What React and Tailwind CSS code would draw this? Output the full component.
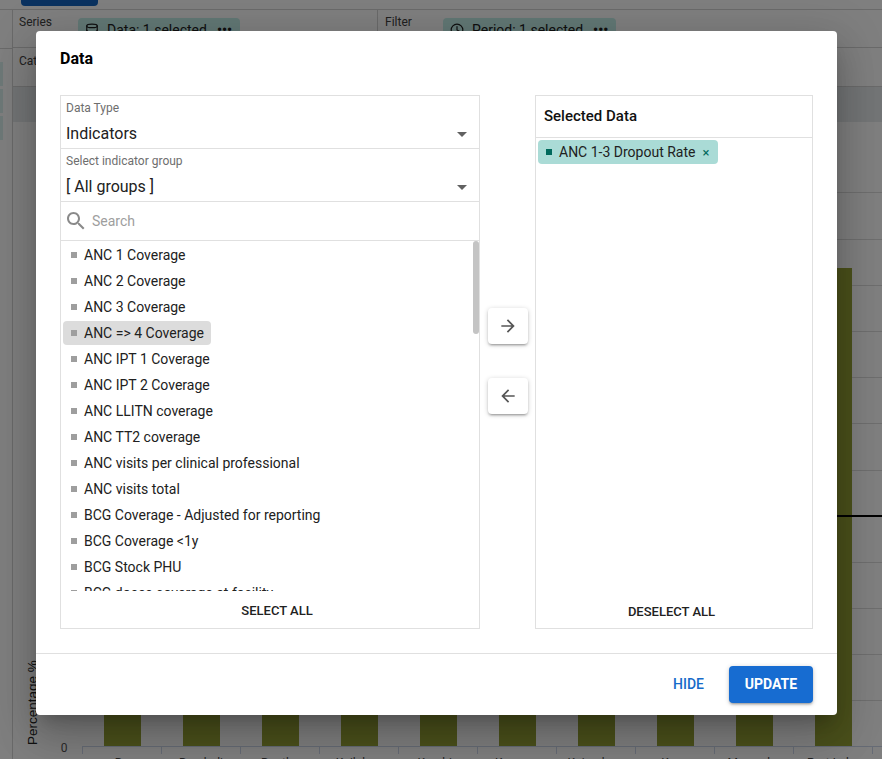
import React from 'react';
import { Database, Clock } from 'lucide-react';

const indicators = [
  'ANC 1 Coverage',
  'ANC 2 Coverage',
  'ANC 3 Coverage',
  'ANC => 4 Coverage',
  'ANC IPT 1 Coverage',
  'ANC IPT 2 Coverage',
  'ANC LLITN coverage',
  'ANC TT2 coverage',
  'ANC visits per clinical professional',
  'ANC visits total',
  'BCG Coverage - Adjusted for reporting',
  'BCG Coverage <1y',
  'BCG Stock PHU',
  'BCG doses coverage at facility',
  'BCG doses given',
];

const districts = ['Bo', 'Bombali', 'Bonthe', 'Kailahun', 'Kambia', 'Kenema', 'Koinadugu', 'Kono', 'Moyamba', 'Port Loko'];

const CaretDown = () => (
  <svg width="24" height="24" viewBox="0 0 24 24" fill="#616161" className="shrink-0">
    <path d="M7 10l5 5 5-5z" />
  </svg>
);

const SelectRow = ({ label, value }) => (
  <div className="h-[53px] border-b border-[#e0e0e0] pl-[5px] pr-[5px]">
    <div className="text-[12px] leading-[14px] pt-[5px] h-[23px] text-[#6e6e6e]">{label}</div>
    <div className="flex items-center justify-between h-[29px]">
      <span className="text-[16px] text-[#212121]">{value}</span>
      <CaretDown />
    </div>
  </div>
);

const ArrowButton = ({ d }) => (
  <button className="w-10 h-9 rounded bg-white flex items-center justify-center shadow-[0_1px_5px_rgba(0,0,0,0.2),0_2px_2px_rgba(0,0,0,0.14),0_3px_1px_-2px_rgba(0,0,0,0.12)]">
    <svg width="20" height="20" viewBox="0 0 24 24" fill="#555555">
      <path d={d} />
    </svg>
  </button>
);

const Chart = () => (
  <svg width="869" height="637" viewBox="13 122 869 637" className="block">
    {[192, 239, 285, 331, 377, 423, 470, 516, 562, 608, 654, 700].map((y) => (
      <line key={y} x1="82" x2="882" y1={y + 0.5} y2={y + 0.5} stroke="#dcdcdc" />
    ))}
    {districts.map((name, i) => (
      <g key={name}>
        <rect x={104 + i * 79} y="268" width="37" height="478" fill="#96a336" />
        <line x1={82.5 + i * 79} x2={82.5 + i * 79} y1="746" y2="754" stroke="#ccd6eb" />
        <text x={122 + i * 79} y="767" textAnchor="middle" fontSize="12" fill="#444">{name}</text>
      </g>
    ))}
    <line x1="872.5" x2="872.5" y1="746" y2="754" stroke="#ccd6eb" />
    <line x1="82" x2="882" y1="746.5" y2="746.5" stroke="#ccd6eb" />
    <line x1="82" x2="882" y1="516" y2="516" stroke="#000" strokeWidth="2" />
    <text x="64" y="752" textAnchor="middle" fontSize="12" fill="#555">0</text>
    <text transform="translate(37 745) rotate(-90)" fontSize="13.5" fill="#222" style={{ fontFamily: '"Liberation Sans", sans-serif' }}>Percentage %</text>
  </svg>
);

const App = () => {
  return (
    <div className="relative w-[882px] h-[759px] overflow-hidden bg-white font-['Roboto',sans-serif] text-[#212121]">
      {/* page behind the dialog */}
      <div className="h-[10px] border-b border-[#d4d4d4] pl-[21px]">
        <div className="w-[77px] h-[6px] bg-[#1565c0] rounded-b" />
      </div>
      <div className="flex h-[749px]">
        <div className="w-[13px] shrink-0 border-r border-[#d4d4d4]">
          <div className="h-[39px] border-b border-[#d4d4d4]" />
          <div className="mt-[13px] flex flex-col gap-[3px]">
            <div className="w-[3px] h-[24px] bg-[#dcf3f0]" />
            <div className="w-[3px] h-[24px] bg-[#dcf3f0]" />
            <div className="w-[3px] h-[24px] bg-[#dcf3f0]" />
          </div>
        </div>
        <div className="flex-1 min-w-0">
          <div className="flex h-[38px] border-b border-[#d4d4d4]">
            <div className="w-[365px] border-r border-[#d4d4d4] flex pl-[6px] pt-[3px]">
              <span className="text-[12px] w-[59px] text-[#424242]">Series</span>
              <div className="w-[162px] h-[24px] mt-[5px] rounded bg-[#c4f0eb] flex items-center gap-[8px] pl-[7px] text-[14px]">
                <Database size={14} />
                <span>Data: 1 selected</span>
                <span className="font-bold ml-[2px]">•••</span>
              </div>
            </div>
            <div className="flex pl-[7px] pt-[3px]">
              <span className="text-[12px] w-[58px] text-[#424242]">Filter</span>
              <div className="w-[173px] h-[24px] mt-[5px] rounded bg-[#c4f0eb] flex items-center gap-[8px] pl-[7px] text-[14px]">
                <Clock size={14} />
                <span>Period: 1 selected</span>
                <span className="font-bold ml-[2px]">•••</span>
              </div>
            </div>
          </div>
          <div className="h-[39px] border-b border-[#d4d4d4] pl-[6px] pt-[4px] text-[12px] text-[#424242]">Category</div>
          <div className="h-[35px] bg-[#e6eaec]" />
          <Chart />
        </div>
      </div>

      {/* dialog */}
      <div className="absolute inset-0 bg-black/50 pl-[36px] pt-[31px]">
        <div className="w-[801px] h-[684px] rounded bg-white flex flex-col shadow-[0_11px_15px_-7px_rgba(0,0,0,0.2),0_24px_38px_3px_rgba(0,0,0,0.14),0_9px_46px_8px_rgba(0,0,0,0.12)]">
          <div className="h-[64px] shrink-0 pl-[24px] pt-[18px] text-[16px] leading-[20px] font-bold text-black">Data</div>

          <div className="flex h-[534px] shrink-0 pl-[24px]">
            <div className="w-[420px] border border-[#e0e0e0] flex flex-col">
              <SelectRow label="Data Type" value="Indicators" />
              <SelectRow label="Select indicator group" value="[ All groups ]" />
              <div className="h-[39px] shrink-0 border-b border-[#e0e0e0] flex items-center pl-[3px]">
                <svg width="24" height="24" viewBox="0 0 24 24" fill="#8a8a8a" className="shrink-0">
                  <path d="M15.5 14h-.79l-.28-.27C15.41 12.59 16 11.11 16 9.5 16 5.91 13.09 3 9.5 3S3 5.91 3 9.5 5.91 16 9.5 16c1.61 0 3.09-.59 4.23-1.57l.27.28v.79l5 4.99L20.49 19l-4.99-5zm-6 0C7.01 14 5 11.99 5 9.5S7.01 5 9.5 5 14 7.01 14 9.5 11.99 14 9.5 14z" />
                </svg>
                <span className="ml-[4px] text-[14px] text-[#9e9e9e]">Search</span>
              </div>
              <div className="relative h-[350px] shrink-0 overflow-hidden pl-[2px] pt-[2px]">
                <div className="flex flex-col gap-[2px]">
                  {indicators.map((name) => (
                    <div key={name} className={`flex items-center w-fit h-[24px] shrink-0 pl-[8px] pr-[7px] rounded text-[14px] text-[#212121] ${name === 'ANC => 4 Coverage' ? 'bg-[#dcdcdc]' : ''}`}>
                      <span className="w-[6px] h-[6px] bg-[#9e9e9e] mr-[7px] shrink-0" />
                      {name}
                    </div>
                  ))}
                </div>
                <div className="absolute right-0 top-0 w-[6px] h-[93px] rounded bg-[#c4c4c4]" />
              </div>
              <div className="flex-1 flex items-start justify-center pt-[12px] pl-[14px] text-[13px] font-medium leading-[16px] text-[#212121]">
                SELECT ALL
              </div>
            </div>

            <div className="w-[55px] shrink-0 flex flex-col items-center justify-center gap-[34px] pb-[2px]">
              <ArrowButton d="M12 4l-1.41 1.41L16.17 11H4v2h12.17l-5.58 5.59L12 20l8-8z" />
              <ArrowButton d="M20 11H7.83l5.59-5.59L12 4l-8 8 8 8 1.41-1.41L7.83 13H20v-2z" />
            </div>

            <div className="w-[278px] border border-[#e0e0e0] flex flex-col">
              <div className="h-[42px] shrink-0 border-b border-[#e0e0e0] flex items-center pl-[8px] text-[15px] font-medium text-[#111]">
                Selected Data
              </div>
              <div className="flex-1 pl-[2px] pt-[2px]">
                <div className="flex items-center w-[180px] h-[24px] rounded bg-[#aadbd6] pl-[8px] text-[14px] text-[#212121]">
                  <span className="w-[6px] h-[6px] bg-[#00695c] mr-[7px] shrink-0" />
                  ANC 1-3 Dropout Rate
                  <span className="ml-[7px] text-[13px] leading-none text-[#00695c]">×</span>
                </div>
              </div>
              <div className="h-[36px] shrink-0 flex justify-center pt-[12px] pr-[5px] text-[13px] font-medium leading-[16px] text-[#212121]">
                DESELECT ALL
              </div>
            </div>
          </div>

          <div className="mt-[24px] flex-1 border-t border-[#e0e0e0] flex justify-end items-start pt-[12px] pr-[24px]">
            <span className="h-[37px] flex items-center mr-[25px] text-[14px] font-medium text-[#176bc9]">HIDE</span>
            <button className="w-[84px] h-[37px] rounded bg-[#176cd1] text-white text-[14px] font-bold shadow-[0_1px_5px_rgba(0,0,0,0.2),0_2px_2px_rgba(0,0,0,0.14),0_3px_1px_-2px_rgba(0,0,0,0.12)]">
              UPDATE
            </button>
          </div>
        </div>
      </div>
    </div>
  );
};

export default App;
